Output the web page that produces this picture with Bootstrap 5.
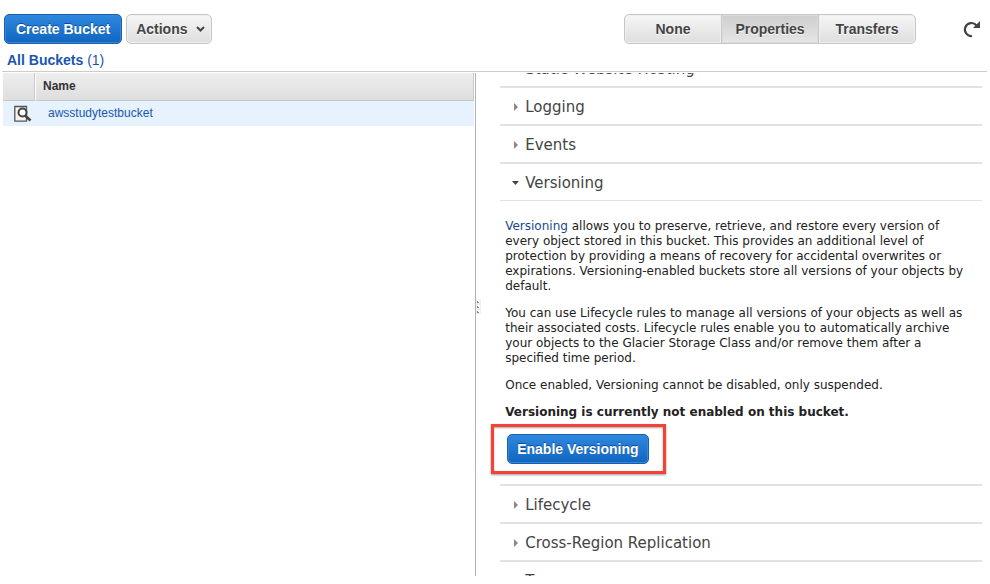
<!DOCTYPE html>
<html lang="en">
<head>
<meta charset="utf-8">
<meta name="viewport" content="width=device-width, initial-scale=1">
<title>S3 Management Console</title>
<link href="https://cdn.jsdelivr.net/npm/bootstrap@5.3.0/dist/css/bootstrap.min.css" rel="stylesheet">
<style>
body { font-family: "Liberation Sans", Arial, sans-serif; font-size: 12px; line-height: 15px; color: #222; background: #fff; }
a { color: #1a56b0; text-decoration: none; }
.console { height: 100vh; padding-bottom: 8px; }
.topbar { padding: 14px 8px 0 4px; }
.crumbs { padding: 8px 7px; font-size: 14px; line-height: 16px; height: 27px; }
.rule { border-top: 1px solid #ccc; margin: 0 3px 0 2px; }
.console .btn { height: 30px; padding: 0 10px; border-radius: 5px; font-family: "Liberation Sans", Arial, sans-serif; font-size: 14px; line-height: 28px; font-weight: 700; }
.btn-blue, .btn-blue:hover { color: #fff; border: 1px solid #1560b0; background: linear-gradient(#2f87df, #1166bf); box-shadow: inset 0 0 0 1px #3a86d4; text-shadow: 0 -1px 0 #0d4c92; }
.btn-grey, .btn-grey:hover { color: #444; border: 1px solid #c6c6c6; background: linear-gradient(#f6f6f6, #dedede); box-shadow: inset 0 0 0 1px #f0f0f0; text-shadow: 0 1px 0 #fff; }
.console .btn-create { padding: 0 11px; }
.console .btn-enable { padding: 0 9px; }
.console .btn-actions { padding: 0 6px 0 9px; }
.btn-grey.active { color: #444; border-color: #c6c6c6; background: linear-gradient(#cdcdcd, #e6e6e6); box-shadow: inset 0 0 0 1px #dcdcdc; }
.view-switch .btn { width: 98px; padding: 0; }
.refresh { width: 20px; height: 20px; margin-left: 46px; }
.panes { padding-top: 1px; }
.bucket-pane { flex: 0 0 48%; padding: 0 1px 0 3px; }
.bucket-table { border-collapse: separate; border-spacing: 0; }
.bucket-table th { height: 28px; padding: 0 7px; background: linear-gradient(#eee, #dedede); border-right: 1px solid #c8c8c8; border-bottom: 1px solid #c8c8c8; color: #333; }
.bucket-table th + th { border-left: 1px solid #fff; }
.bucket-table td { height: 25px; padding: 0 13px; background: #e6f2fe; }
.bucket-table .icon-cell { width: 32px; padding: 0 0 0 11px; }
.prop-pane { position: relative; border-left: 1px solid #b4b4b4; padding: 0 8px 0 24px; }
.grip { position: absolute; left: 0; top: 45%; }
.scrolled { margin-top: -23px; }
.section-head { font-family: "DejaVu Sans", Verdana, sans-serif; font-size: 15px; line-height: 18px; font-weight: 400; color: #444; height: 38px; margin: 0; border-bottom: 2px solid #e2e2e2; }
.section-head button { width: 100%; padding: 2px 0 0 12px; gap: 6px; color: inherit; text-align: left; }
.section-head.open { height: 37px; border-bottom-width: 1px; }
.section-text { font-family: "DejaVu Sans", Verdana, sans-serif; font-size: 12px; line-height: 15px; padding: 18px 12px 10px 5px; color: #222; }
.section-text a { color: #144a8c; }
.section-text p { margin-bottom: 12px; }
.section-text .state { margin-bottom: 4px; }
.callout-box { display: inline-block; vertical-align: top; border: 3px solid #f44336; padding: 7px 14px 7px 13px; margin-left: -14px; box-shadow: 0 1px 2px #999, inset 0 1px 2px #aaa; }
.section-head.after-open { height: 40px; border-top: 2px solid #e2e2e2; }
</style>
</head>
<body>
<div class="console d-flex flex-column">
  <header>
    <div class="topbar d-flex align-items-center">
      <button type="button" class="btn btn-blue btn-create">Create Bucket</button>
      <button type="button" class="btn btn-grey btn-actions ms-1 d-flex align-items-center">Actions
        <svg class="ms-2" width="9" height="6" viewBox="0 0 9 6" aria-hidden="true"><path d="M1 1l3.500 3.500L8 1" fill="none" stroke="#444" stroke-width="2"/></svg>
      </button>
      <div class="btn-group view-switch ms-auto" role="group" aria-label="Panel">
        <button type="button" class="btn btn-grey">None</button>
        <button type="button" class="btn btn-grey active" aria-pressed="true">Properties</button>
        <button type="button" class="btn btn-grey">Transfers</button>
      </div>
      <button type="button" class="refresh border-0 bg-transparent p-0 d-flex" aria-label="Refresh">
        <svg width="20" height="20" viewBox="0 0 20 20" aria-hidden="true"><path d="M10 17A6.500 6.500 0 1 1 14.500 6.500" fill="none" stroke="#444" stroke-width="2.200"/><path d="M18 2v7h-7z" fill="#444"/></svg>
      </button>
    </div>
    <nav class="crumbs" aria-label="Buckets"><a href="#"><strong>All Buckets</strong> (1)</a></nav>
    <div class="rule"></div>
  </header>
  <main class="panes d-flex flex-grow-1 overflow-hidden">
    <section class="bucket-pane">
      <table class="bucket-table w-100">
        <thead><tr><th class="icon-cell" aria-label="Details"></th><th scope="col">Name</th></tr></thead>
        <tbody><tr>
          <td class="icon-cell"><svg class="d-block" width="18" height="18" viewBox="0 0 18 18" aria-hidden="true"><path d="M12.500 1.500H.8v14.700h11.700z" fill="#f4f4f4" stroke="#555" stroke-width="1.300"/><circle cx="8.500" cy="7.500" r="4" fill="#fff" stroke="#444" stroke-width="2"/><path d="M11 10.500l5.500 5" stroke="#444" stroke-width="2.600"/></svg></td>
          <td><a href="#">awsstudytestbucket</a></td>
        </tr></tbody>
      </table>
    </section>
    <section class="prop-pane flex-grow-1 overflow-hidden">
      <svg class="grip" width="5" height="15" viewBox="0 0 5 15" aria-hidden="true"><path d="M0 0h5v15H0z" fill="#eee"/><path d="M1 1h3v3H1zM1 6h3v3H1zM1 11h3v3H1z" fill="#fff"/><path d="M1 2v2h2v-1h-1v-1zM1 7v2h2v-1h-1v-1zM1 12v2h2v-1h-1v-1z" fill="#888"/></svg>
      <div class="scrolled">
        <h2 class="section-head d-flex"><button type="button" class="border-0 bg-transparent d-flex align-items-center"><svg width="7" height="8" viewBox="0 0 7 8" aria-hidden="true"><path d="M2 0v8l4-4z" fill="#888"/></svg>Static Website Hosting</button></h2>
        <h2 class="section-head d-flex"><button type="button" class="border-0 bg-transparent d-flex align-items-center"><svg width="7" height="8" viewBox="0 0 7 8" aria-hidden="true"><path d="M2 0v8l4-4z" fill="#888"/></svg>Logging</button></h2>
        <h2 class="section-head d-flex"><button type="button" class="border-0 bg-transparent d-flex align-items-center"><svg width="7" height="8" viewBox="0 0 7 8" aria-hidden="true"><path d="M2 0v8l4-4z" fill="#888"/></svg>Events</button></h2>
        <h2 class="section-head open d-flex"><button type="button" class="border-0 bg-transparent d-flex align-items-center" aria-expanded="true"><svg width="7" height="8" viewBox="0 0 7 8" aria-hidden="true"><path d="M0 2h7l-3.500 4z" fill="#444"/></svg>Versioning</button></h2>
        <div class="section-text">
          <p><a href="#">Versioning</a> allows you to preserve, retrieve, and restore every version of every object stored in this bucket. This provides an additional level of protection by providing a means of recovery for accidental overwrites or expirations. Versioning-enabled buckets store all versions of your objects by default.</p>
          <p>You can use Lifecycle rules to manage all versions of your objects as well as their associated costs. Lifecycle rules enable you to automatically archive your objects to the Glacier Storage Class and/or remove them after a specified time period.</p>
          <p>Once enabled, Versioning cannot be disabled, only suspended.</p>
          <p class="state fw-bold">Versioning is currently not enabled on this bucket.</p>
          <div class="callout-box"><button type="button" class="btn btn-blue btn-enable d-block">Enable Versioning</button></div>
        </div>
        <h2 class="section-head after-open d-flex"><button type="button" class="border-0 bg-transparent d-flex align-items-center"><svg width="7" height="8" viewBox="0 0 7 8" aria-hidden="true"><path d="M2 0v8l4-4z" fill="#888"/></svg>Lifecycle</button></h2>
        <h2 class="section-head d-flex"><button type="button" class="border-0 bg-transparent d-flex align-items-center"><svg width="7" height="8" viewBox="0 0 7 8" aria-hidden="true"><path d="M2 0v8l4-4z" fill="#888"/></svg>Cross-Region Replication</button></h2>
        <h2 class="section-head d-flex"><button type="button" class="border-0 bg-transparent d-flex align-items-center"><svg width="7" height="8" viewBox="0 0 7 8" aria-hidden="true"><path d="M2 0v8l4-4z" fill="#888"/></svg>Tags</button></h2>
      </div>
    </section>
  </main>
</div>
<script src="https://cdn.jsdelivr.net/npm/bootstrap@5.3.0/dist/js/bootstrap.bundle.min.js"></script>
</body>
</html>
